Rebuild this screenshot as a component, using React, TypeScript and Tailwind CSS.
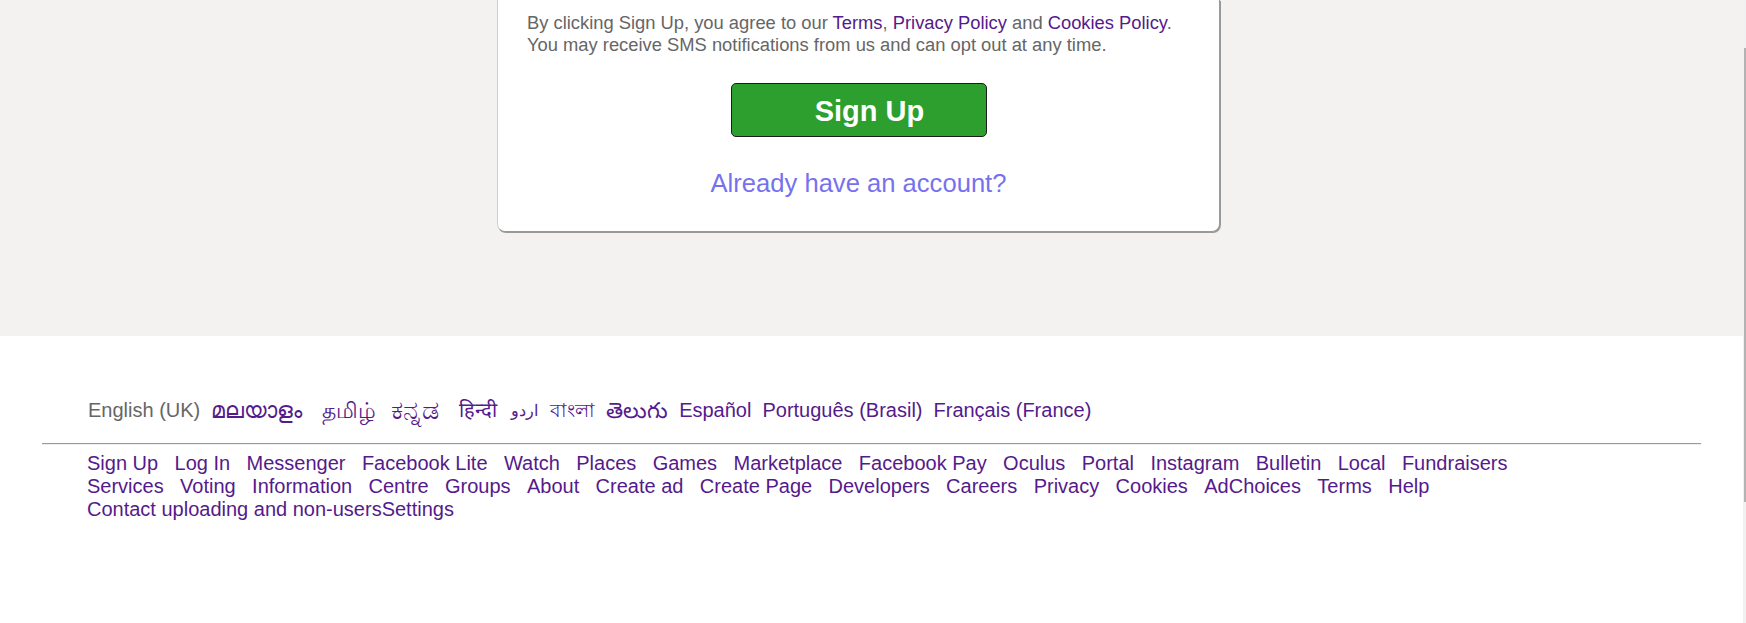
import React from "react";

// ширины и размеры подобраны под отрисовку шрифтов в оригинале
const languages = [
  { name: "മലയാളം", cls: "w-[99.5px] text-[22px]" },
  { name: "தமிழ்", cls: "w-[58px] text-[22px]" },
  { name: "ಕನ್ನಡ", cls: "w-[57px] text-[27px]" },
  { name: "हिन्दी", cls: "w-[41.3px]" },
  { name: "اردو", cls: "w-[28px] text-[16px]" },
  { name: "বাংলা", cls: "w-[44.6px] text-[19px]" },
  { name: "తెలుగు", cls: "w-[62.5px] text-[22px]" },
  { name: "Español", cls: "" },
  { name: "Português (Brasil)", cls: "" },
  { name: "Français (France)", cls: "" },
];

const links = [
  "Sign Up",
  "Log In",
  "Messenger",
  "Facebook Lite",
  "Watch",
  "Places",
  "Games",
  "Marketplace",
  "Facebook Pay",
  "Oculus",
  "Portal",
  "Instagram",
  "Bulletin",
  "Local",
  "Fundraisers",
  "Services",
  "Voting",
  "Information",
  "Centre",
  "Groups",
  "About",
  "Create ad",
  "Create Page",
  "Developers",
  "Careers",
  "Privacy",
  "Cookies",
  "AdChoices",
  "Terms",
  "Help",
];

const App = () => {
  return (
    <div className="flex h-[623px] w-full overflow-hidden font-['Liberation_Sans',Arial,sans-serif]">
      <div className="flex flex-1 flex-col">
        {/* Карточка регистрации */}
        <section className="h-[336px] shrink-0 bg-[#f3f2f0] pl-[497px]">
          <div className="w-[723px] rounded-b-[8px] border border-t-0 border-[#cfcfcf] border-r-[#999] border-b-[#999] bg-white px-[29px] pt-[12px] pb-[33px] shadow-[1px_1px_0_0_#999]">
            <p className="text-[18.35px] leading-[22px] text-[#666]">
              By clicking Sign Up, you agree to our{" "}
              <a href="#" className="text-[#551a8b]">Terms</a>,{" "}
              <a href="#" className="text-[#551a8b]">Privacy Policy</a> and{" "}
              <a href="#" className="text-[#551a8b]">Cookies Policy</a>.
              <br />
              You may receive SMS notifications from us and can opt out at any time.
            </p>
            <div className="mt-[27px] flex justify-center">
              <button className="h-[54px] w-[256px] rounded-[5px] border border-[#1c1c1c] bg-[#2c9f2f] pt-[3px] pl-[22px] text-[29px] font-bold text-white">
                Sign Up
              </button>
            </div>
            <div className="mt-[32px] text-center text-[25.6px] leading-[29px] text-[#7672ee]">
              <a href="#">Already have an account?</a>
            </div>
          </div>
        </section>

        {/* Подвал */}
        <footer className="flex-1 bg-white px-[42px] pt-[63px] text-[20px] leading-[23px]">
          <div className="flex h-[23px] flex-wrap gap-x-[11px] pl-[46px]">
            <span className="text-[#666]">English (UK)</span>
            {languages.map((l) => (
              <a key={l.name} href="#" className={`${l.cls} whitespace-nowrap leading-[23px] text-[#551a8b]`}>
                {l.name}
              </a>
            ))}
          </div>
          <div className="mt-[21px] border-t border-[#999] shadow-[0_1px_0_0_#eee]" />
          <div className="mt-[8px] flex w-[1515px] flex-wrap gap-x-[16.4px] pl-[45px] text-[#551a8b]">
            {links.map((l) => (
              <a key={l} href="#">
                {l}
              </a>
            ))}
            <span>
              <a href="#">Contact uploading and non-users</a>
              <a href="#">Settings</a>
            </span>
          </div>
        </footer>
      </div>

      {/* Полоса прокрутки */}
      <div className="w-[3px] shrink-0 bg-[#f1f1f1]">
        <div className="mt-[48px] ml-[1px] h-[454px] w-[2px] bg-[#b3b3b3]" />
      </div>
    </div>
  );
};

export default App;
